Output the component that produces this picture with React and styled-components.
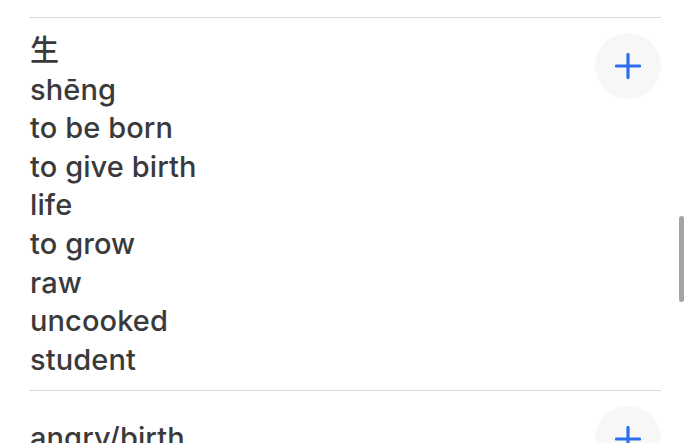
import styled, { createGlobalStyle } from 'styled-components';

const GlobalStyle = createGlobalStyle`
  html, body {
    margin: 0;
    padding: 0;
    background: #ffffff;
    overflow: hidden;
  }
  body {
    font-family: Inter, "Noto Sans CJK SC", sans-serif;
  }
`;

const Page = styled.div`
  position: relative;
  width: 690px;
  height: 443px;
  overflow: hidden;
  background: #ffffff;
`;

const List = styled.div`
  padding: 17px 29px 0 29px;
`;

const Row = styled.div`
  display: flex;
  justify-content: space-between;
  align-items: flex-start;
  border-top: 1px solid #dadada;
  padding: ${({ offset }) => 14 + (offset || 0)}px 0 11px 1px;
`;

const Lines = styled.div`
  display: flex;
  flex-direction: column;
`;

const Line = styled.div`
  font-family: Inter, "Noto Sans CJK SC", sans-serif;
  font-size: 29px;
  font-weight: 500;
  line-height: 38.6px;
  letter-spacing: 0.1px;
  color: #3a3a3c;
  white-space: nowrap;
`;

const AddButton = styled.button`
  flex: none;
  width: 66px;
  height: 66px;
  margin-top: ${({ offset }) => 1 - (offset || 0)}px;
  border: none;
  border-radius: 50%;
  background: #f7f7f7;
  display: flex;
  align-items: center;
  justify-content: center;
  padding: 0;
  cursor: pointer;
`;

const Scrollbar = styled.div`
  position: absolute;
  left: 679px;
  top: 216px;
  width: 5px;
  height: 86px;
  border-radius: 3px;
  background: #a3a3a3;
`;

const PlusIcon = () => (
  <svg width="26" height="26" viewBox="0 0 26 26">
    <path
      d="M13 1.5v23M1.5 13h23"
      stroke="#2b6ff0"
      strokeWidth="3.2"
      strokeLinecap="round"
      fill="none"
    />
  </svg>
);

const entries = [
  {
    lines: ['生', 'shēng', 'to be born', 'to give birth', 'life', 'to grow', 'raw', 'uncooked', 'student'],
  },
  { lines: ['angry/birth', ''], offset: 14 },
];

export default function App() {
  return (
    <Page>
      <GlobalStyle />
      <List>
        {entries.map((entry, i) => (
          <Row key={i} offset={entry.offset}>
            <Lines>
              {entry.lines.map((text, j) => (
                <Line key={j}>{text}</Line>
              ))}
            </Lines>
            <AddButton offset={entry.offset} aria-label="Add">
              <PlusIcon />
            </AddButton>
          </Row>
        ))}
      </List>
      <Scrollbar />
    </Page>
  );
}
